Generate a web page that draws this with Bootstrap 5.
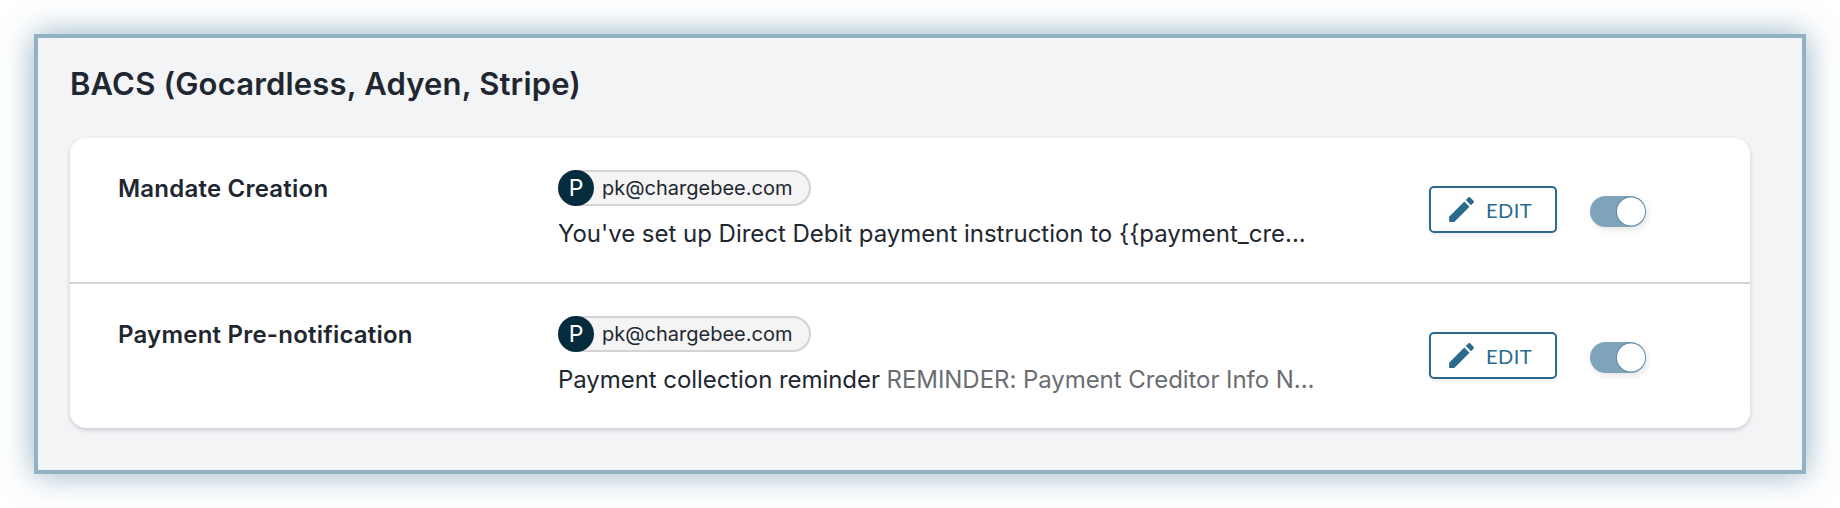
<!DOCTYPE html>
<html lang="en">
<head>
<meta charset="utf-8">
<title>BACS</title>
<link href="https://cdn.jsdelivr.net/npm/bootstrap@5.3.0/dist/css/bootstrap.min.css" rel="stylesheet">
<style>
body{background:#fff;font-family:Inter,"Liberation Sans",sans-serif;color:#212730;padding:34px;height:508px;overflow:hidden}
.frame{height:440px;background:#f3f4f6;border:4px solid #92b1c1;box-shadow:0 0 30px rgba(50,105,140,.52);padding:0 52px 0 32px}
.frame-title{font-size:31px;font-weight:600;line-height:36px;letter-spacing:.18px;padding-top:28px;margin:0 0 36px;color:#212730}
.panel{background:#fff;border-radius:16px;box-shadow:0 2px 4px rgba(60,60,80,.22);height:290px}
.entry{height:144px;padding-left:48px}
.entry+.entry{height:146px;border-top:2px solid #d2d4d6}
.entry-name{width:440px;font-size:24px;font-weight:600;line-height:30px;letter-spacing:.22px;padding-top:36px;flex:none}
.entry-main{width:871px;padding-top:32px;flex:none}
.who{display:inline-flex;align-items:center;height:36px;background:#f4f4f4;border:2px solid #d3d3d3;border-left:0;border-radius:18px;font-size:20px;padding-right:17px}
.who-dot{width:36px;height:36px;border-radius:50%;background:#042c3c;color:#fff;display:flex;align-items:center;justify-content:center;font-size:23px;margin-right:8px;margin-top:-2px;margin-bottom:-2px}
.entry-text{font-size:24px;line-height:30px;margin-top:13px;white-space:nowrap;letter-spacing:-.02px}
.entry+.entry .entry-text{margin-top:13px;letter-spacing:-.06px}
.entry-sub{color:#6a6d72}
.edit-btn{width:128px;height:47px;margin-top:48px;border:2px solid #2b6a8d;border-radius:5px;color:#2b6a8d;background:#fff;font-family:Lato,sans-serif;font-size:20px;letter-spacing:.5px;padding:0 9px 0 0;box-shadow:0 2px 4px rgba(0,0,0,.08);display:flex;align-items:center;justify-content:center;gap:8px}
.edit-btn:hover{color:#2b6a8d;background:#fff;border-color:#2b6a8d}
.edit-btn svg{width:33px;height:33px;fill:#2b6a8d}
.form-switch.toggle{padding:0;margin:58px 0 0 33px;min-height:0}
.form-switch.toggle .form-check-input{margin:0;float:none;display:block;width:56px;height:31px;border:0;border-radius:16px;background-color:#7fa3b9;background-image:radial-gradient(circle at 41px 15.5px,#fff 0,#fff 13.5px,#5e8aa3 14.5px,#7fa3b9 15.5px);background-size:auto;box-shadow:2px 3px 6px rgba(0,0,0,.1)}
</style>
</head>
<body>
<div class="frame">
  <h1 class="frame-title">BACS (Gocardless, Adyen, Stripe)</h1>
  <div class="panel">
    <div class="entry d-flex">
      <div class="entry-name">Mandate Creation</div>
      <div class="entry-main">
        <div class="who"><span class="who-dot">P</span>pk@chargebee.com</div>
        <div class="entry-text">You've set up Direct Debit payment instruction to {{payment_cre...</div>
      </div>
      <button type="button" class="btn edit-btn"><svg viewBox="0 0 24 24" aria-hidden="true"><path d="M3 17.25V21h3.75L17.81 9.94l-3.75-3.75L3 17.25zM20.71 7.04c.39-.39.39-1.02 0-1.41l-2.34-2.34c-.39-.39-1.02-.39-1.41 0l-1.83 1.83 3.75 3.75 1.83-1.83z"/></svg>EDIT</button>
      <div class="form-check form-switch toggle"><input class="form-check-input" type="checkbox" role="switch" checked aria-label="Mandate Creation"></div>
    </div>
    <div class="entry d-flex">
      <div class="entry-name">Payment Pre-notification</div>
      <div class="entry-main">
        <div class="who"><span class="who-dot">P</span>pk@chargebee.com</div>
        <div class="entry-text">Payment collection reminder <span class="entry-sub">REMINDER: Payment Creditor Info N...</span></div>
      </div>
      <button type="button" class="btn edit-btn"><svg viewBox="0 0 24 24" aria-hidden="true"><path d="M3 17.25V21h3.75L17.81 9.94l-3.75-3.75L3 17.25zM20.71 7.04c.39-.39.39-1.02 0-1.41l-2.34-2.34c-.39-.39-1.02-.39-1.41 0l-1.83 1.83 3.75 3.75 1.83-1.83z"/></svg>EDIT</button>
      <div class="form-check form-switch toggle"><input class="form-check-input" type="checkbox" role="switch" checked aria-label="Payment Pre-notification"></div>
    </div>
  </div>
</div>
</body>
</html>
